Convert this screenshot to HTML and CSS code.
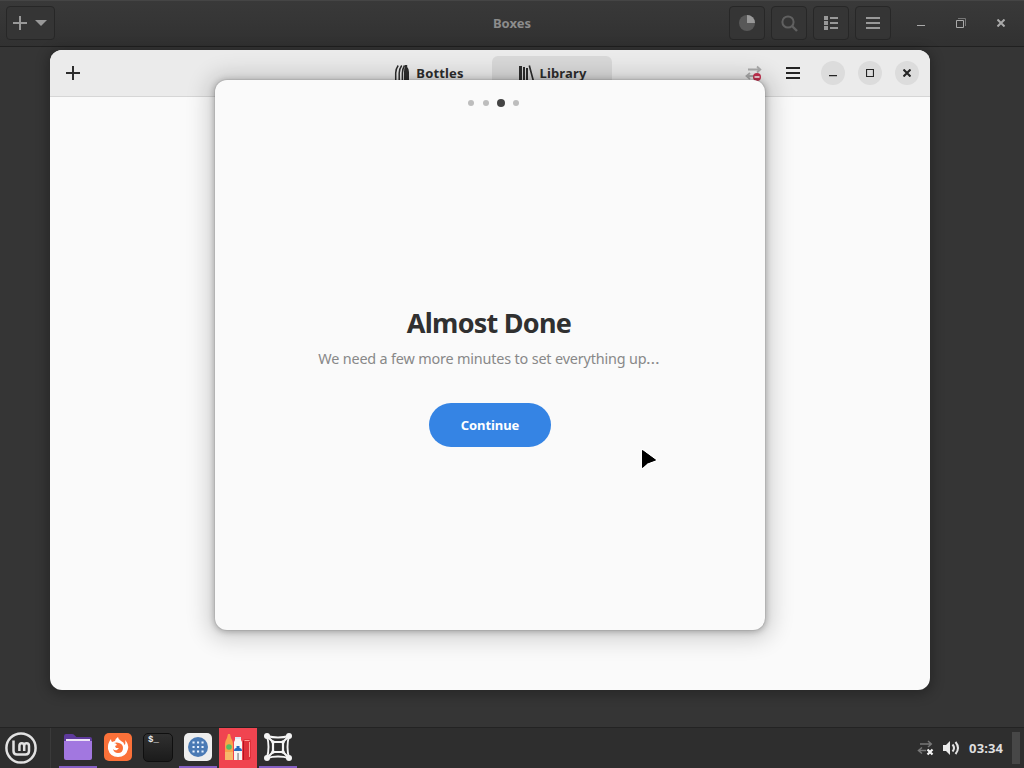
FILE: index.html
```html
<!DOCTYPE html>
<html lang="en">
<head>
  <meta charset="UTF-8">
  <title>Boxes</title>
  <link rel="stylesheet" href="styles.css">
</head>
<body>
  <header class="boxes-bar">
    <div class="bar-left">
      <button class="bar-button new-button">
        <svg width="14" height="14" viewBox="0 0 14 14"><path d="M7 0v14M0 7h14" stroke="#999" stroke-width="2"/></svg>
        <svg width="12" height="6" viewBox="0 0 12 6"><path d="M0 0h12L6 6z" fill="#999"/></svg>
      </button>
    </div>
    <div class="boxes-title">Boxes</div>
    <div class="bar-right">
      <button class="bar-button">
        <svg width="16" height="16" viewBox="0 0 16 16"><circle cx="8" cy="8" r="8" fill="#585858"/><path d="M8 8V0a8 8 0 0 1 8 8z" fill="#999"/></svg>
      </button>
      <button class="bar-button">
        <svg width="17" height="17" viewBox="0 0 17 17" fill="none" stroke="#606060"><circle cx="7" cy="7" r="5.6" stroke-width="2"/><path d="M11 11l5 5" stroke-width="2.4"/></svg>
      </button>
      <button class="bar-button">
        <svg width="14" height="14" viewBox="0 0 14 14" fill="#999"><path d="M0 0h4v4H0zM0 5h4v4H0zM0 10h4v4H0zM6 1h8v2H6zM6 6h8v2H6zM6 11h8v2H6z"/></svg>
      </button>
      <button class="bar-button">
        <svg width="14" height="12" viewBox="0 0 14 12" fill="#999"><path d="M0 0h14v2H0zM0 5h14v2H0zM0 10h14v2H0z"/></svg>
      </button>
      <div class="bar-controls">
        <span><svg width="10" height="10" viewBox="0 0 10 10"><path d="M1 7h8v1H1z" fill="#aaa"/></svg></span>
        <span><svg width="10" height="10" viewBox="0 0 10 10" fill="none" stroke="#aaa"><path d="M.5 2.500h7v7h-7z"/><path d="M2 .5h7.500V8" stroke="#777"/></svg></span>
        <span><svg width="8" height="8" viewBox="0 0 8 8"><path d="M.5.5l7 7M7.500.5l-7 7" stroke="#aaa" stroke-width="2"/></svg></span>
      </div>
    </div>
  </header>

  <main class="screen">
    <section class="window">
      <header class="window-bar">
        <div class="window-left">
          <svg width="14" height="14" viewBox="0 0 14 14"><path d="M7 0v14M0 7h14" stroke="#2d2d2d" stroke-width="2"/></svg>
        </div>
        <nav class="tabs">
          <a class="tab">
            <svg width="16" height="16" viewBox="0 0 16 16"><path d="M10.800 0h2.400v2q1.800 1.800 1.800 5v9h-5V7q0-3.200.8-5z" fill="#2d2d2d"/><path d="M4.200.5Q1.700 4 1.700 8v8M7.700.5Q5.200 4 5.200 8v8M10.500.5Q8.400 4 8.400 8v8" fill="none" stroke="#2d2d2d" stroke-width="1.500"/></svg>
            Bottles
          </a>
          <a class="tab active">
            <svg width="16" height="16" viewBox="0 0 16 16" fill="#2d2d2d"><path d="M1 1h3v15H1zM5 2h2v14H5zM8 3h2v13H8zM10.500.800l1.600-.5L16 15l-1.600.5z"/></svg>
            Library
          </a>
        </nav>
        <div class="window-right">
          <span class="tool">
            <svg width="17" height="16" viewBox="0 0 17 16"><path d="M3 4.500h12M12 1.500l3.300 3L12 7.500M11 11H1.500M5 8l-3.500 3L5 14" fill="none" stroke="#aaa" stroke-width="1.800"/><circle cx="12" cy="12" r="4" fill="#c5304f"/><path d="M9.500 11.200h5v1.600h-5z" fill="#fff"/></svg>
          </span>
          <span class="tool">
            <svg width="14" height="12" viewBox="0 0 14 12" fill="#242424"><path d="M0 0h14v2H0zM0 5h14v2H0zM0 10h14v2H0z"/></svg>
          </span>
          <div class="window-controls">
            <button class="round"><svg width="10" height="10" viewBox="0 0 10 10"><path d="M1 7h8v1.200H1z" fill="#242424"/></svg></button>
            <button class="round"><svg width="8" height="8" viewBox="0 0 8 8"><path d="M.5.5h7v7h-7z" fill="none" stroke="#242424" stroke-width="1.200"/></svg></button>
            <button class="round"><svg width="8" height="8" viewBox="0 0 8 8"><path d="M.5.5l7 7M7.500.5l-7 7" stroke="#242424" stroke-width="2.100"/></svg></button>
          </div>
        </div>
      </header>
    </section>

    <section class="dialog">
      <div class="dots">
        <span class="dot"></span>
        <span class="dot"></span>
        <span class="dot current"></span>
        <span class="dot"></span>
      </div>
      <div class="dialog-content">
        <h1>Almost Done</h1>
        <p>We need a few more minutes to set everything up<span class="ellipsis">…</span></p>
        <button class="continue">Continue</button>
      </div>
    </section>
  </main>

  <footer class="panel">
    <div class="menu">
      <svg width="32" height="32" viewBox="0 0 32 32" fill="none" stroke="#e2e2e2"><circle cx="16" cy="16" r="14.600" stroke-width="2.500"/><path d="M8.500 8.500V19q0 3.500 3.500 3.500h8.500q3.500 0 3.500-3.500v-5q0-2.700-2.400-2.700t-2.400 2.700v5M19.200 14q0-2.700-2.400-2.700T14.400 14v5" stroke-width="2.500"/></svg>
    </div>
    <div class="launchers">
      <div class="launcher running">
        <svg width="28" height="26" viewBox="0 0 28 26"><path d="M0 2q0-2 2-2h6q1.500 0 2.500 1.200L12.500 3H26q2 0 2 2v8H0z" fill="#5e3a9c"/><path d="M2 5h24v5H2z" fill="#eee4f7"/><path d="M0 7h28v17q0 2-2 2H2q-2 0-2-2z" fill="#a277e0"/></svg>
      </div>
      <div class="launcher">
        <svg width="28" height="28" viewBox="0 0 28 28"><rect width="28" height="28" rx="5" fill="#fb7139"/><path d="M7 6q0 2 1 3l3-1q0-2 3-4 0 2 3 4 3 1 3.500 4 1.500-1 .5-5 4 4 3 9-2 8-10 8T4 16q-.5-6 3-10z" fill="#fff"/><path d="M10 10q3-1 5 0 4 1 4 5 0 5-5 5-4 0-5-4 2 2 4 1l2-2h-3l-1-2 2-1q-1-2-3-2z" fill="#fb7139"/></svg>
      </div>
      <div class="launcher">
        <div class="terminal">$_</div>
      </div>
      <div class="launcher running">
        <svg width="28" height="28" viewBox="0 0 28 28"><rect width="28" height="28" rx="5" fill="#eee"/><circle cx="14" cy="14" r="10" fill="#4a7ab5"/><path d="M9.500 9.500h.1M14 9.500h.1M18.500 9.500h.1M9.500 14h.1M14 14h.1M18.500 14h.1M9.500 18.500h.1M14 18.500h.1M18.500 18.500h.1" stroke="#e6f1ff" stroke-width="2" stroke-linecap="square"/></svg>
      </div>
      <div class="launcher focused">
        <svg width="28" height="28" viewBox="0 0 28 28"><path d="M1 27V11q0-3 2-6l1-4h2l1 4q2 3 2 6v16z" fill="#f9a24b"/><path d="M1 19h8v8H1z" fill="#f7b96a"/><circle cx="5" cy="14" r="2.800" fill="#54bf64"/><path d="M10 27V9l1-2V4h6v3l1 2v18z" fill="#f6f5f4"/><path d="M11 4h6v2h-6z" fill="#dce8f5"/><path d="M10 18q0-3 2.500-3v-2h3v2q2.500 0 2.500 3z" fill="#2469ba"/><path d="M13.300 20h1.500v7h-1.500z" fill="#999"/><path d="M19 27V8q0-2 2-2h4q2 0 2 2v17l-2 2z" fill="#e0303a"/><path d="M20.500 7.500h5M25.500 9v15" fill="none" stroke="#ff9d97"/><path d="M19.500 8v19" stroke="#b3141f"/></svg>
      </div>
      <div class="launcher running">
        <svg width="28" height="28" viewBox="0 0 28 28" fill="none" stroke="#f4f4f4" stroke-width="2.200"><path d="M3 3q11 3 22 0M3 25q11-3 22 0M3 3q3 11 0 22M25 3q-3 11 0 22" stroke-width="1.900"/><path d="M9 9v10h10V9zM3 3l6 6M25 3l-6 6M3 25l6-6M25 25l-6-6"/><g fill="#f4f4f4" stroke="none"><circle cx="3" cy="3" r="3"/><circle cx="25" cy="3" r="3"/><circle cx="3" cy="25" r="3"/><circle cx="25" cy="25" r="3"/><circle cx="9" cy="9" r="1.800"/><circle cx="19" cy="9" r="1.800"/><circle cx="9" cy="19" r="1.800"/><circle cx="19" cy="19" r="1.800"/></g></svg>
      </div>
    </div>
    <div class="tray">
      <svg width="17" height="16" viewBox="0 0 17 16" fill="none"><path d="M3 4h11M11 1l3.300 3L11 7M9 10.500H1.500M5 7.500l-3.500 3 3.500 3" stroke="#777" stroke-width="1.500"/><path d="M10.500 9.500l5 5M15.500 9.500l-5 5" stroke="#f4f4f4" stroke-width="2.200"/></svg>
      <svg width="17" height="16" viewBox="0 0 17 16" fill="none"><path d="M0 5h3l4-4v14l-4-4H0z" fill="#ececec"/><path d="M9.500 4.500q3 3.500 0 7M12.500 2q5 6 0 12" stroke="#e4e4e4" stroke-width="2"/></svg>
      <span class="clock">03:34</span>
    </div>
    <div class="show-desktop"></div>
  </footer>

  <svg class="cursor" width="18" height="24" viewBox="0 0 18 24"><path d="M2.500 2.500v17l5-4.500 8-3z" fill="#000" stroke="#fff" stroke-width="3" stroke-linejoin="round" paint-order="stroke"/><path d="M2.500 2.500v17l5-4.500 8-3z" stroke="#000" stroke-linejoin="round"/></svg>
</body>
</html>
```

FILE: styles.css
```css
* {
  box-sizing: border-box;
}
body {
  margin: 0;
  width: 1024px;
  height: 768px;
  overflow: hidden;
  display: flex;
  flex-direction: column;
  background: #353535;
  font-family: "Noto Sans", sans-serif;
  font-size: 13px;
}
svg {
  display: block;
  flex: none;
}
button {
  padding: 0;
  border: none;
  font-family: inherit;
}

/* Boxes title bar */
.boxes-bar {
  height: 47px;
  padding: 0 3px 1px 6px;
  display: grid;
  grid-template-columns: 1fr auto 1fr;
  align-items: center;
  background: linear-gradient(#393939, #313131);
  border-top: 1px solid #454545;
  border-bottom: 1px solid #202020;
}
.boxes-title {
  margin-right: 3px;
  color: #8c8c8c;
  font-weight: bold;
}
.bar-right {
  display: flex;
  gap: 6px;
  justify-content: flex-end;
}
.bar-button {
  width: 36px;
  height: 34px;
  display: flex;
  align-items: center;
  justify-content: center;
  background: #353535;
  border: 1px solid #272727;
  border-radius: 4px;
}
.new-button {
  width: 49px;
  padding-right: 2px;
  gap: 8px;
}
.bar-controls {
  display: flex;
  margin-left: 4px;
}
.bar-controls span {
  width: 40px;
  display: flex;
  align-items: center;
  justify-content: center;
}

/* Bottles window */
.screen {
  flex: 1;
}
.window {
  position: absolute;
  left: 50px;
  top: 50px;
  width: 880px;
  height: 640px;
  background: #fafafa;
  border-radius: 12px;
  overflow: hidden;
  box-shadow: 0 2px 12px 3px rgba(0, 0, 0, 0.25);
}
.window-bar {
  height: 47px;
  padding: 0 11px 0 16px;
  display: grid;
  grid-template-columns: 1fr auto 1fr;
  align-items: center;
  background: #ebebeb;
  border-bottom: 1px solid #d6d6d6;
}
.tabs {
  display: flex;
  gap: 3px;
  margin-right: 4px;
}
.tab {
  width: 120px;
  height: 34px;
  display: flex;
  align-items: center;
  justify-content: center;
  gap: 6px;
  border-radius: 6px;
  font-weight: bold;
  letter-spacing: 0.15px;
  color: #2d2d2d;
}
.tab.active {
  background: #d9d9d9;
}
.window-right {
  display: flex;
  align-items: center;
  justify-content: flex-end;
}
.tool {
  width: 40px;
  display: flex;
  justify-content: center;
}
.window-controls {
  display: flex;
  gap: 13px;
  margin-left: 8px;
}
.round {
  width: 24px;
  height: 24px;
  display: flex;
  align-items: center;
  justify-content: center;
  border-radius: 50%;
  background: #dcdcdc;
}

/* Setup dialog */
.dialog {
  position: absolute;
  left: 215px;
  top: 80px;
  width: 550px;
  height: 550px;
  display: flex;
  flex-direction: column;
  background: #fafafa;
  border-radius: 12px;
  box-shadow: 0 2px 22px 8px rgba(0, 0, 0, 0.16), 0 1px 6px 1px rgba(0, 0, 0, 0.25), 0 0 0 1px rgba(0, 0, 0, 0.05);
}
.dots {
  height: 46px;
  padding-left: 7px;
  display: flex;
  justify-content: center;
  align-items: center;
}
.dot {
  width: 15px;
  display: flex;
  justify-content: center;
}
.dot::before {
  content: "";
  width: 6px;
  height: 6px;
  border-radius: 50%;
  background: #bdbdbd;
}
.dot.current::before {
  width: 8px;
  height: 8px;
  background: #444;
}
.dialog-content {
  flex: 1;
  padding-top: 179px;
  display: flex;
  flex-direction: column;
  align-items: center;
}
h1 {
  margin: 0 2px 0 0;
  font-size: 27px;
  line-height: 36px;
  letter-spacing: -0.75px;
  color: #303030;
}
p {
  margin: 8px 4px 0 0;
  font-size: 14.4px;
  line-height: 20px;
  letter-spacing: -0.17px;
  color: #888;
  white-space: nowrap;
}
.ellipsis {
  letter-spacing: 0;
  display: inline-block;
  transform: scaleX(1.2);
  transform-origin: left;
}
.continue {
  width: 122px;
  height: 44px;
  margin-top: 34px;
  border-radius: 22px;
  background: #3584e4;
  color: #fff;
  font-size: 13px;
  font-weight: bold;
  letter-spacing: -0.1px;
}

/* Bottom panel */
.panel {
  height: 41px;
  padding-right: 4px;
  display: flex;
  align-items: center;
  background: #2e2e2e;
  border-top: 1px solid #232323;
}
.menu {
  width: 51px;
  height: 40px;
  padding: 4px 0 0 5px;
  border-right: 1px solid #3a3a3a;
}
.launchers {
  display: flex;
  gap: 2px;
  margin-left: 8px;
}
.launcher {
  width: 38px;
  height: 40px;
  display: flex;
  align-items: center;
  justify-content: center;
  border-bottom: 2px solid transparent;
}
.launcher.running {
  border-bottom-color: #8560c4;
}
.launcher.focused {
  background: #f04450;
}
.terminal {
  width: 30px;
  height: 29px;
  padding: 0 0 0 4px;
  border: 1px solid #0f0f0f;
  border-radius: 5px;
  background: linear-gradient(#303030, #1b1b1b);
  color: #eee;
  font: bold 9px/12px "Liberation Mono", monospace;
}
.tray {
  margin-left: auto;
  display: flex;
  align-items: center;
  gap: 9px;
}
.clock {
  color: #dedede;
  font-weight: bold;
  letter-spacing: 0.1px;
}
.show-desktop {
  width: 8px;
  height: 32px;
  margin-left: 9px;
  background: #474747;
}

.cursor {
  position: absolute;
  left: 640px;
  top: 448px;
}
```
